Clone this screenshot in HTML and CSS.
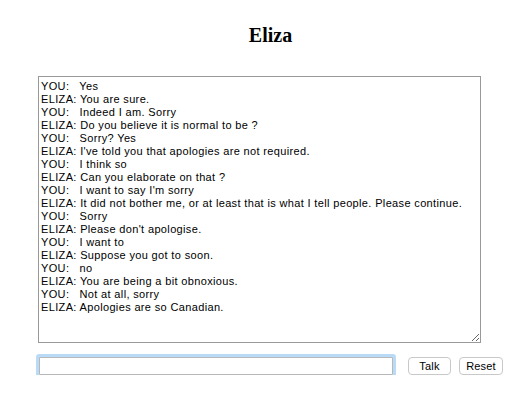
FILE: index.html
```
<!doctype html>
<html lang="en">
<head>
  <meta charset="utf-8">
  <title>Eliza</title>
  <link rel="stylesheet" href="styles.css">
</head>
<body>
  <div id="container">
    <h1>Eliza</h1>
    <textarea id="log" class="log" readonly>YOU:   Yes
ELIZA: You are sure.
YOU:   Indeed I am. Sorry
ELIZA: Do you believe it is normal to be ?
YOU:   Sorry? Yes
ELIZA: I've told you that apologies are not required.
YOU:   I think so
ELIZA: Can you elaborate on that ?
YOU:   I want to say I'm sorry
ELIZA: It did not bother me, or at least that is what I tell people. Please continue.
YOU:   Sorry
ELIZA: Please don't apologise.
YOU:   I want to
ELIZA: Suppose you got to soon.
YOU:   no
ELIZA: You are being a bit obnoxious.
YOU:   Not at all, sorry
ELIZA: Apologies are so Canadian.</textarea>
    <form class="talk" onsubmit="return false">
      <input type="text" id="say" class="say" autofocus>
      <button type="submit" class="btn btn-talk">Talk</button>
      <button type="button" class="btn">Reset</button>
    </form>
  </div>
</body>
</html>
```
FILE: styles.css
```
body { margin: 0; background: #fff; font-family: "Liberation Sans", Arial, sans-serif; }
#container { width: 517px; }
h1 { font-family: "Liberation Serif", "Times New Roman", serif; font-size: 20px; line-height: 23px; text-align: center; margin: 24px 0 0; padding-left: 24px; }
.log { display: block; box-sizing: border-box; width: 443px; height: 267px; margin: 29px 0 0 38px; padding: 3px 2px; border: 1px solid #999; font-family: "Liberation Sans", Arial, sans-serif; font-size: 11px; line-height: 13px; letter-spacing: 0.35px; color: #000; white-space: pre-wrap; outline: none; }
.talk { display: flex; align-items: center; margin: 14px 0 0 39px; }
.say { box-sizing: border-box; width: 354px; height: 18px; padding: 0 2px; border: 1px solid #b8b8b8; border-radius: 1px; box-shadow: 0 0 0 3px #b9dbf7; outline: none; font-size: 11px; caret-color: #000; }
.btn { box-sizing: border-box; height: 18px; padding: 0 6px; border: 1px solid #c8c8c8; border-radius: 4px; background: #fff; font-family: "Liberation Sans", Arial, sans-serif; font-size: 11px; letter-spacing: 0.2px; color: #000; }
.btn-talk { width: 43px; margin: 0 8px 0 15px; }
.btn + .btn { width: 44px; margin: 0; }
```
